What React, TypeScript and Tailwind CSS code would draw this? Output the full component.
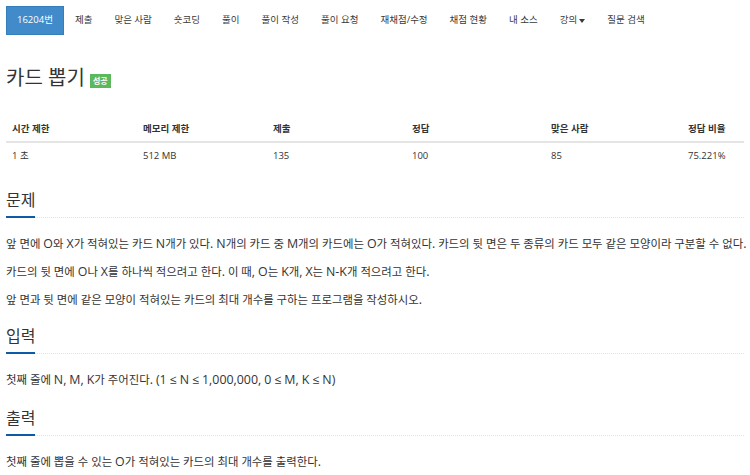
import React from "react";

const FONT = { fontFamily: '"Open Sans", "Noto Sans CJK KR", sans-serif' };

const navItems = ["제출", "맞은 사람", "숏코딩", "풀이", "풀이 작성", "풀이 요청", "재채점/수정", "채점 현황", "내 소스"];

function Mixed({ text }: { text: string }) {
  const parts = text.match(/[^\s\uAC00-\uD7A3]+|[\s\uAC00-\uD7A3]+/g) || [];
  return (
    <>
      {parts.map((p, i) =>
        /[\uAC00-\uD7A3\s]/.test(p[0]) ? (
          <React.Fragment key={i}>{p}</React.Fragment>
        ) : (
          <span key={i} className="text-[12.4px]">{p}</span>
        )
      )}
    </>
  );
}

function Heading({ children }: { children: React.ReactNode }) {
  return (
    <div className="flex border-b border-dotted border-[#e3e3e3]">
      <span className="text-[16px] leading-[31px] text-[#333] border-b-2 border-[#0d5aa7] mb-[-1px]">{children}</span>
    </div>
  );
}

function Para({ text }: { text: string }) {
  return (
    <p className="h-[28px] whitespace-nowrap">
      <Mixed text={text} />
    </p>
  );
}

export default function App() {
  return (
    <div className="w-[750px] h-[475px] overflow-hidden bg-white text-[#333]" style={FONT}>
      <nav className="flex items-start pl-[6px] pt-[6px] text-[9.5px] text-[#3a3a3a]">
        <div className="h-[29px] px-[10px] flex items-center bg-[#428bca] border border-[#357ebd] text-white">16204번</div>
        {navItems.map((t) => (
          <div key={t} className="h-[29px] px-[11px] flex items-center">{t}</div>
        ))}
        <div className="h-[29px] px-[11px] flex items-center gap-[2px]">
          강의
          <svg width="6" height="4" viewBox="0 0 6 4"><path d="M0 0h6L3 4z" fill="#3a3a3a" /></svg>
        </div>
        <div className="h-[29px] px-[11px] flex items-center">질문 검색</div>
      </nav>

      <div className="px-[6px]">
        <div className="mt-[31px] h-[24px] flex items-center">
          <span className="w-[84px] whitespace-nowrap text-[20px] leading-[24px] text-[#333]">카드 뽑기</span>
          <span className="mt-[5px] h-[14px] px-[3px] flex items-center bg-[#5cb85c] text-white text-[8px] font-bold">성공</span>
        </div>

        <div className="mt-[28px] grid grid-cols-[131px_130px_139px_139px_137px_1fr] text-[9.5px]">
          {["시간 제한", "메모리 제한", "제출", "정답", "맞은 사람", "정답 비율"].map((h) => (
            <div key={h} className="h-[25px] px-[6px] flex items-center font-bold border-b-2 border-[#e5e5e5]">{h}</div>
          ))}
          {["1 초", "512 MB", "135", "100", "85", "75.221%"].map((c) => (
            <div key={c} className="h-[26px] px-[6px] flex items-center">{c}</div>
          ))}
        </div>

        <div className="mt-[16px]">
          <Heading>문제</Heading>
          <div className="mt-[12px] text-[11.4px] leading-[28px]">
            <Para text="앞 면에 O와 X가 적혀있는 카드 N개가 있다. N개의 카드 중 M개의 카드에는 O가 적혀있다. 카드의 뒷 면은 두 종류의 카드 모두 같은 모양이라 구분할 수 없다." />
            <Para text="카드의 뒷 면에 O나 X를 하나씩 적으려고 한다. 이 때, O는 K개, X는 N-K개 적으려고 한다." />
            <Para text="앞 면과 뒷 면에 같은 모양이 적혀있는 카드의 최대 개수를 구하는 프로그램을 작성하시오." />
          </div>
        </div>

        <div className="mt-[7px]">
          <Heading>입력</Heading>
          <div className="mt-[12px] text-[11.4px] leading-[28px]">
            <Para text="첫째 줄에 N, M, K가 주어진다. (1 ≤ N ≤ 1,000,000, 0 ≤ M, K ≤ N)" />
          </div>
        </div>

        <div className="mt-[9px]">
          <Heading>출력</Heading>
          <div className="mt-[12px] text-[11.4px] leading-[28px]">
            <Para text="첫째 줄에 뽑을 수 있는 O가 적혀있는 카드의 최대 개수를 출력한다." />
          </div>
        </div>
      </div>
    </div>
  );
}
